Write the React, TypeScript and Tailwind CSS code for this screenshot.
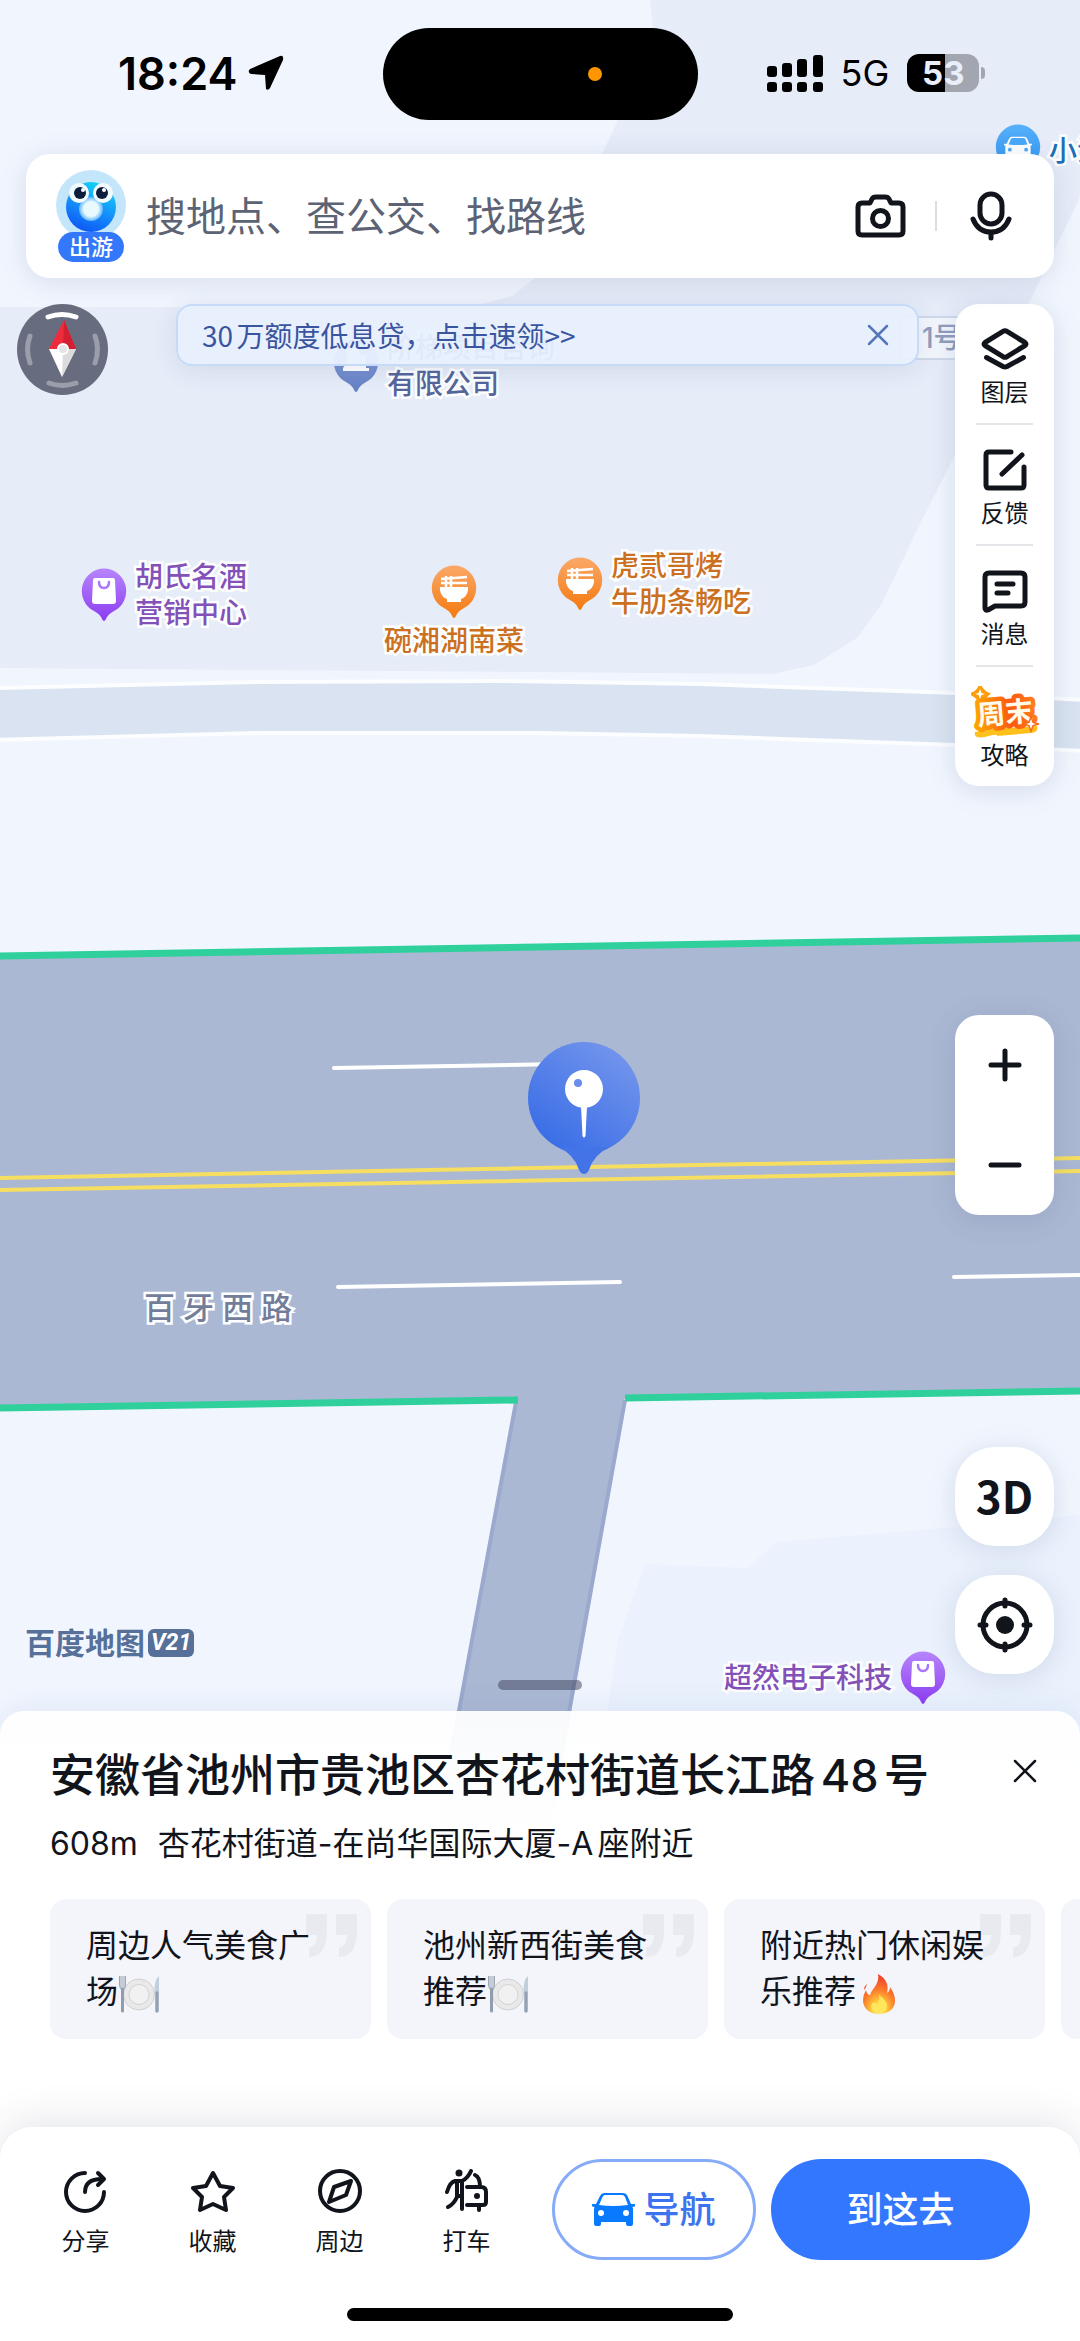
import type { ReactNode } from "react";

const tools = [
  { label: "图层", icon: <LayersIcon /> },
  { label: "反馈", icon: <FeedbackIcon /> },
  { label: "消息", icon: <MessageIcon /> },
  { label: "攻略", icon: <WeekendIcon /> },
];

const suggestions = [
  { text: "周边人气美食广场", emoji: <PlateEmoji /> },
  { text: "池州新西街美食推荐", emoji: <PlateEmoji /> },
  { text: "附近热门休闲娱乐推荐", emoji: <FireEmoji /> },
  { text: "", emoji: null },
];

const actions = [
  { label: "分享", icon: <ShareIcon /> },
  { label: "收藏", icon: <StarIcon /> },
  { label: "周边", icon: <NearbyIcon /> },
  { label: "打车", icon: <TaxiIcon /> },
];

const LineIcon = ({
  width,
  height,
  stroke = 4,
  children,
}: {
  width: number;
  height: number;
  stroke?: number;
  children: ReactNode;
}) => (
  <svg
    width={width}
    height={height}
    viewBox={`0 0 ${width} ${height}`}
    fill="none"
    stroke="#11141b"
    strokeWidth={stroke}
    strokeLinecap="round"
    strokeLinejoin="round"
    aria-hidden="true"
  >
    {children}
  </svg>
);

function LayersIcon() {
  return (
    <LineIcon width={48} height={42} stroke={5}>
      <path d="M22 3.4Q24 2 26 3.4L44 14.5Q46 16 44 17.5L26 28.6Q24 30 22 28.6L4 17.5Q2 16 4 14.5Z" />
      <path d="M5.5 29.5L22 38.5Q24 39.500 26 38.5L42.500 29.5" />
    </LineIcon>
  );
}

function FeedbackIcon() {
  return (
    <LineIcon width={44} height={42} stroke={5}>
      <path d="M28 3H6Q3 3 3 6V36Q3 39 6 39H38Q41 39 41 36V18" />
      <path d="M19 25L39 6" />
    </LineIcon>
  );
}

function MessageIcon() {
  return (
    <LineIcon width={46} height={43} stroke={5}>
      <path d="M7 3H39Q43 3 43 7V32Q43 36 39 36H13L6 40Q3 41 3 38V7Q3 3 7 3Z" />
      <path d="M15 14H31M15 23H26" />
    </LineIcon>
  );
}

function WeekendIcon() {
  return (
    <svg width="68" height="52" viewBox="0 0 68 52" aria-hidden="true">
      <defs>
        <linearGradient id="weekend" x1="0" x2="1" y1="0" y2="0">
          <stop offset="0" stopColor="#ffa200" />
          <stop offset="0.6" stopColor="#fb5a12" />
          <stop offset="1" stopColor="#ff7a1a" />
        </linearGradient>
      </defs>
      <path d="M4 46L20 43L66 40Q68 46 60 47L26 50Q28 47 14 51Q2 53 4 46Z" fill="#ffc01c" />
      <path d="M9 0Q12 6 17 8Q12 12 10 17Q8 12 1 8Q7 6 9 0Z" fill="#ff9d0a" stroke="#ff9d0a" strokeWidth="3" />
      <text
        x="34"
        y="37"
        textAnchor="middle"
        fontSize="28"
        fontWeight="700"
        fill="#fffbe8"
        stroke="url(#weekend)"
        strokeWidth="9"
        strokeLinejoin="round"
        paintOrder="stroke"
        fontFamily="'Noto Sans CJK SC', sans-serif"
        transform="rotate(-5 34 26)"
      >
        周末
      </text>
      <path d="M9 3L10.500 7L14 8L10.500 9L9 13L7.500 9L4 8L7.500 7Z" fill="#fff" />
      <path d="M60 33L61.500 37L65 38L61.500 39L60 43L58.500 39L55 38L58.500 37Z" fill="#fff" stroke="#fb6a18" strokeWidth="3" paintOrder="stroke" />
    </svg>
  );
}

function ShareIcon() {
  return (
    <LineIcon width={44} height={44}>
      <path d="M21 4A19 19 0 1 0 40 23" />
      <path d="M21 23C21 14 27 10 38 10" />
      <path d="M34 4L40 10L34 16" />
    </LineIcon>
  );
}

function StarIcon() {
  return (
    <LineIcon width={44} height={44}>
      <path d="M22 4L29 17L42 19L33 28L35 41L22 35L9 41L11 28L2 19L15 17Z" />
    </LineIcon>
  );
}

function NearbyIcon() {
  return (
    <LineIcon width={44} height={44}>
      <circle cx="22" cy="22" r="20" />
      <path d="M33 12L28 26L11 33L16 18Z" />
    </LineIcon>
  );
}

function TaxiIcon() {
  return (
    <LineIcon width={44} height={44}>
      <circle cx="14" cy="4" r="3.500" fill="#11141b" stroke="none" />
      <path d="M2 23Q5 13 10 12H17Q23 9 26 2" />
      <path d="M12 13V28Q9 35 3 38M17 13V40M12 27H17" />
      <path d="M30 6Q35 8 35 18M22 18H36Q41 18 41 23V33Q41 36 38 36H22M34 37V41" />
      <circle cx="32" cy="27" r="3" fill="#11141b" stroke="none" />
    </LineIcon>
  );
}

// fork, plate and knife
function PlateEmoji() {
  return (
    <svg className="inline-block align-middle" width="42" height="38" viewBox="0 0 42 38" aria-label="餐盘">
      <circle cx="21" cy="19.500" r="15.500" fill="#e9e9ea" stroke="#d0d0d2" />
      <circle cx="21" cy="19.500" r="10" fill="#f1f1f2" stroke="#d3d3d5" />
      <path d="M1.500 1V10Q2 15 4.500 15T7.500 10V1" fill="#c5ccd5" stroke="#9da7b3" />
      <path d="M4.500 14V36" stroke="#8f9dae" strokeWidth="3" strokeLinecap="round" />
      <path d="M41 1Q36 5 36.500 18H41Z" fill="#bfd0dc" />
      <path d="M39 18V36" stroke="#93a2b4" strokeWidth="3.500" strokeLinecap="round" />
    </svg>
  );
}

function FireEmoji() {
  return (
    <svg className="ml-1.5 inline-block align-middle" width="34" height="42" viewBox="0 0 34 42" aria-label="火">
      <defs>
        <radialGradient id="fire" cx="0.5" cy="0.9" r="0.8">
          <stop offset="0" stopColor="#fff28a" />
          <stop offset="0.3" stopColor="#ffc63a" />
          <stop offset="0.65" stopColor="#fb7a2c" />
          <stop offset="1" stopColor="#ee4a2b" />
        </radialGradient>
      </defs>
      <path
        d="M16 1C24 5 27 12 25 20Q28 18 28 14Q33 21 33 28C33 36 26 41 17 41C7 41 1 35 1 27Q1 22 4 17Q5 22 8 22C10 15 18 11 16 1Z"
        fill="url(#fire)"
      />
      <path d="M5 11Q4 15 2 17Q2 13 5 11Z" fill="#f0552b" />
      <path d="M17 22Q24 27 25 32Q25 40 17 40Q9 40 9 33Q10 30 12 29Q13 31 15 31Q18 28 17 22Z" fill="#ffe65a" />
    </svg>
  );
}

const CarShape = ({ body, glass }: { body: string; glass: string }) => (
  <>
    <path
      d="M12 1H31Q34 1 35.500 4L39 12H43V14Q42.500 15 40.500 15L41 17V32Q41 34 39 34H36Q34 34 34 32V30H9V32Q9 34 7 34H4Q2 34 2 32V17L2.500 15Q.5 15 0 14V12H4L8 4Q9.500 1 12 1Z"
      fill={body}
    />
    <path d="M13 3H30Q32 3 33 5L36 13Q21 15 7 13L10.500 5Q11.500 3 13 3Z" fill={glass} />
    <circle cx="9" cy="21" r="3" fill={glass} />
    <circle cx="34" cy="21" r="3" fill={glass} />
  </>
);

type PoiKind = "shop" | "food" | "office" | "parking";

const pinColors: Record<PoiKind, [string, string]> = {
  shop: ["#b685fb", "#8c3df0"],
  food: ["#fba868", "#f47a10"],
  office: ["#8ba2dc", "#6580c4"],
  parking: ["#57b1fb", "#2a8eee"],
};

const PoiPin = ({ kind }: { kind: PoiKind }) => (
  <svg className="shrink-0" width="46" height="54" viewBox="0 0 46 54" aria-hidden="true">
    <defs>
      <linearGradient id={`pin-${kind}`} x1="0" x2="0" y1="0" y2="1">
        <stop offset="0" stopColor={pinColors[kind][0]} />
        <stop offset="1" stopColor={pinColors[kind][1]} />
      </linearGradient>
    </defs>
    <path
      d="M23 0.500A22.500 22.500 0 0 1 33 43Q27 46 25 51Q23 55 21 51Q19 46 13 43A22.500 22.500 0 0 1 23 0.500Z"
      fill={`url(#pin-${kind})`}
    />
    {kind === "shop" && (
      <>
        <path d="M14 10H32Q34 10 34 12L35 33Q35 36 32 36H14Q11 36 11 33L12 12Q12 10 14 10Z" fill="#fff" />
        <path d="M18 14Q18 20 23 20T28 14" fill="none" stroke="#ab76f8" strokeWidth="2.500" strokeLinecap="round" />
      </>
    )}
    {kind === "food" && (
      <>
        <path d="M9 22H37V25Q36 32 30 34V37H16V34Q10 32 9 25Z" fill="#fff" />
        <path d="M10 14L36 12M10 18H36M15 11V22M20 11V22" stroke="#fff" strokeWidth="2.500" />
      </>
    )}
    {kind === "office" && <path d="M10 32V29L14 23V9H26V16H33V29H36V32Z" fill="#fff" />}
    {kind === "parking" && (
      <g transform="translate(9 12) scale(0.65)">
        <CarShape body="#fff" glass="#4ba8f8" />
      </g>
    )}
  </svg>
);

const halo = "font-medium whitespace-nowrap [-webkit-text-stroke:5px_#fdfeff] [paint-order:stroke_fill]";

const MapCanvas = () => (
  <svg
    className="absolute inset-0 h-full w-full"
    viewBox="0 0 1080 2341"
    preserveAspectRatio="xMidYMin slice"
    aria-hidden="true"
  >
    <rect width="1080" height="2341" fill="#f1f6fe" />
    <path
      d="M650 0H1080V197L1029 303L955 455L922 520L881 605L857 638L814 665L772 674L540 672L0 668V307H470L512 296L535 278L602 154L618 120L653 30Z"
      fill="#e6ecf8"
    />
    <path
      d="M-5 688L260 682L500 681L700 684L955 693L1085 700V751L955 745L700 736L540 733L260 733L-5 740Z"
      fill="#d9e3f1"
      stroke="#fbfdff"
      strokeWidth="4"
    />
    <path d="M645 1564L748 1568L776 1542L955 1527L1080 1515V1760H600L618 1640Z" fill="#ebf2fd" />
    {/* main road and the side street joining it */}
    <path d="M0 956L1080 938V1391L625 1399L514 1402L0 1408Z" fill="#abb8d3" />
    <path d="M516 1398L437 1830H548L625 1396Z" fill="#abb8d3" />
    <path d="M516 1402L437 1830M625 1400L548 1830" stroke="#9aa9cd" strokeWidth="4" />
    <g stroke="#2fd09b" strokeWidth="7">
      <path d="M0 956L1080 938" />
      <path d="M0 1408L518 1400" />
      <path d="M625 1398L1080 1391" />
    </g>
    <path d="M0 1178L1080 1158M0 1190L1080 1171" stroke="#f6de60" strokeWidth="4" />
    <path d="M334 1068L560 1064M338 1287L620 1282M954 1277L1080 1275" stroke="#fff" strokeWidth="4" strokeLinecap="round" />
  </svg>
);

const MapLabels = () => (
  <div className="absolute inset-0 overflow-hidden text-[28px] leading-9">
    <div className="absolute top-[124px] left-[995px] flex items-center gap-2 text-[#1c6fb8]">
      <PoiPin kind="parking" />
      <span className={halo}>小池</span>
    </div>
    <div className="absolute top-[330px] left-[333px] flex items-center gap-2 text-[#55669c]">
      <PoiPin kind="office" />
      <span className={halo}>
        阶梯项目咨询
        <br />
        有限公司
      </span>
    </div>
    <div className="absolute top-[316px] left-[900px] w-24 border-2 border-[#cfd9ea] bg-[#f3f6fc] pl-5 leading-10 text-[#8f9dbd]">
      <span className="font-medium">1号</span>
    </div>
    <div className="absolute top-[559px] left-[81px] flex items-center gap-2 text-[#8351b8]">
      <PoiPin kind="shop" />
      <span className={halo}>
        胡氏名酒
        <br />
        营销中心
      </span>
    </div>
    <div className="absolute top-[565px] left-[384px] flex flex-col items-center gap-1 text-[#cb7020]">
      <PoiPin kind="food" />
      <span className={halo}>碗湘湖南菜</span>
    </div>
    <div className="absolute top-[548px] left-[557px] flex items-center gap-2 text-[#cb7020]">
      <PoiPin kind="food" />
      <span className={halo}>
        虎贰哥烤
        <br />
        牛肋条畅吃
      </span>
    </div>
    <div className="absolute top-[1290px] left-[144px] flex gap-2 text-[31px] text-[#737c99]">
      {"百牙西路".split("").map((char) => (
        <span className={halo} key={char}>
          {char}
        </span>
      ))}
    </div>
    <div className="absolute top-[1651px] left-[724px] flex items-center gap-2 text-[#8351b8]">
      <span className={halo}>超然电子科技</span>
      <PoiPin kind="shop" />
    </div>
    <svg className="absolute top-[1042px] left-[528px]" width="112" height="132" viewBox="0 0 112 132" aria-label="选中位置">
      <defs>
        <linearGradient id="marker" x1="0.8" x2="0.2" y1="0.1" y2="0.9">
          <stop offset="0" stopColor="#7093ec" />
          <stop offset="1" stopColor="#3b6ee6" />
        </linearGradient>
      </defs>
      <circle cx="56" cy="56" r="56" fill="url(#marker)" />
      <path d="M30 105Q46 112 51 128Q53 132 56 132T61 128Q66 112 82 105Z" fill="#4373e7" />
      <circle cx="56" cy="47" r="19" fill="#fff" />
      <circle cx="50" cy="41" r="4" fill="#6a8eeb" />
      <path d="M53 64H59L57.500 94Q56 97 54.500 94Z" fill="#fff" />
    </svg>
  </div>
);

const StatusBar = () => (
  <header className="grid h-[154px] grid-cols-[1fr_315px_1fr] pt-7 text-black">
    <div className="flex h-[92px] items-center justify-end gap-[10px] pr-[99px] pb-0.5">
      <span className="text-[45px] leading-none font-semibold">18:24</span>
      <svg width="36" height="36" viewBox="0 0 36 36" aria-hidden="true">
        <path d="M32 1Q36 0 35 5L22 33Q20 36 18 34L17 20L3 19Q-1 17 2 14Z" fill="#000" />
      </svg>
    </div>
    <div className="flex h-[92px] items-center justify-end rounded-full bg-black pr-24">
      <span className="size-[14px] rounded-full bg-[#ff9500]" />
    </div>
    <div className="flex h-[92px] items-center gap-[18px] pb-0.5 pl-[69px]">
      <svg width="56" height="38" viewBox="0 0 56 38" aria-hidden="true">
        <rect x="0" y="12" width="10" height="11" rx="3" />
        <rect x="15" y="9" width="10" height="14" rx="3" />
        <rect x="30" y="5" width="10" height="18" rx="3" />
        <rect x="46" y="1" width="10" height="22" rx="3" />
        <rect x="0" y="28" width="10" height="10" rx="3" />
        <rect x="15" y="28" width="10" height="10" rx="3" />
        <rect x="30" y="28" width="10" height="10" rx="3" />
        <rect x="46" y="28" width="10" height="10" rx="3" />
      </svg>
      <span className="text-[36px] leading-none">5G</span>
      <div className="flex items-center gap-[2px]">
        <div className="flex h-[38px] w-[72px] items-center justify-center rounded-xl bg-[linear-gradient(90deg,#000_53%,#a2a6b0_53%)] text-[33px] leading-none font-bold text-[#e9eef9]">
          53
        </div>
        <span className="h-3 w-1 rounded-r-full bg-[#a2a6b0]" />
      </div>
    </div>
  </header>
);

const Mascot = () => (
  <div className="flex w-[70px] flex-col items-center">
    <svg width="70" height="70" viewBox="0 0 70 70" aria-hidden="true">
      <defs>
        <linearGradient id="mascot" x1="0.7" x2="0.3" y1="0" y2="1">
          <stop offset="0" stopColor="#14d6f5" />
          <stop offset="0.5" stopColor="#1592fa" />
          <stop offset="1" stopColor="#0e55f5" />
        </linearGradient>
        <radialGradient id="mouth">
          <stop offset="0.6" stopColor="#e8faff" />
          <stop offset="1" stopColor="#5fb4fa" />
        </radialGradient>
      </defs>
      <circle cx="35" cy="35" r="35" fill="#c4e6fb" />
      <circle cx="35" cy="37" r="25" fill="url(#mascot)" />
      <circle cx="35" cy="39" r="12" fill="url(#mouth)" />
      <circle cx="23" cy="23" r="10" fill="#f2fbff" />
      <circle cx="47" cy="23" r="10" fill="#f2fbff" />
      <circle cx="24" cy="23" r="6" fill="#0c1e3c" />
      <circle cx="46" cy="23" r="6" fill="#0c1e3c" />
      <circle cx="27" cy="20" r="2" fill="#fff" />
      <circle cx="48" cy="20" r="2" fill="#fff" />
    </svg>
    <span className="z-10 -mt-2 rounded-full bg-[#3377fb] px-[11px] text-[22px] leading-[30px] font-medium whitespace-nowrap text-white">
      出游
    </span>
  </div>
);

const SearchBar = () => (
  <form
    className="relative mx-[26px] flex h-[124px] items-center rounded-3xl bg-white pr-[42px] pl-[30px] shadow-[0_4px_28px_rgba(60,80,130,0.14)]"
    role="search"
  >
    <Mascot />
    <input
      className="ml-5 min-w-0 flex-1 bg-transparent pt-0.5 text-[40px] text-[#5c6374] outline-none placeholder:text-[#5c6374]"
      type="text"
      aria-label="搜索"
      placeholder="搜地点、查公交、找路线"
    />
    <button type="button" aria-label="拍照搜索">
      <LineIcon width={51} height={44} stroke={5}>
        <path d="M15 9L17 5Q18 3 21 3H30Q33 3 34 5L36 9H44Q48 9 48 13V37Q48 41 44 41H7Q3 41 3 37V13Q3 9 7 9Z" />
        <circle cx="25.500" cy="24.500" r="8" />
      </LineIcon>
    </button>
    <span className="mx-[29px] h-[30px] w-[2px] bg-[#dcdde1]" />
    <button className="ml-1" type="button" aria-label="语音搜索">
      <LineIcon width={42} height={50} stroke={5}>
        <rect x="10" y="3" width="22" height="30" rx="11" />
        <path d="M3 28Q8 41 21 41T39 28M21 41V47" />
      </LineIcon>
    </button>
  </form>
);

const Compass = () => (
  <button type="button" aria-label="指南针">
    <svg width="91" height="91" viewBox="0 0 91 91">
      <circle cx="45.500" cy="45.500" r="45.500" fill="#676d7f" />
      <g fill="none" stroke="#9a9eaa" strokeWidth="5" strokeLinecap="round">
        <path d="M13 32Q8 45 13 59M78 32Q83 45 78 59M32 79Q45 84 59 79" />
        <path d="M31 13Q45 8 59 13" stroke="#fff" />
      </g>
      <path d="M47 16L59 45H32Z" fill="#f02c3c" />
      <path d="M47 16L59 45H46Z" fill="#d31f31" />
      <path d="M32 45H59L45 73Z" fill="#fff" />
      <path d="M46 45H59L45 73Z" fill="#dcdcde" />
      <circle cx="46" cy="45" r="5" fill="#e4e4e6" stroke="#fff" strokeWidth="2" />
    </svg>
  </button>
);

const AdBanner = () => (
  <div className="flex h-[62px] flex-1 items-center justify-between rounded-2xl border-2 border-[#c6dbf8] bg-[#e8f0fe]/95 pr-7 pl-6 shadow-[0_4px_24px_rgba(60,80,130,0.12)]">
    <a className="font-['Noto_Sans_CJK_SC',sans-serif] text-[28px] leading-10 whitespace-nowrap text-[#3a559f] [text-autospace:normal]" href="#loan">
      30万额度低息贷，点击速领&gt;&gt;
    </a>
    <button type="button" aria-label="关闭广告">
      <svg width="22" height="22" viewBox="0 0 22 22" stroke="#5478b8" strokeWidth="2.500" strokeLinecap="round">
        <path d="M2 2L20 20M20 2L2 20" />
      </svg>
    </button>
  </div>
);

const floating = "bg-white shadow-[0_4px_28px_rgba(60,80,130,0.16)]";

const SideControls = () => (
  <div className="flex w-[99px] flex-col">
    <div className={`flex flex-col rounded-3xl px-[21px] ${floating}`}>
      {tools.map((tool) => (
        <button
          className="flex h-[121px] flex-col items-center justify-end gap-0.5 border-b-2 border-[#e4e5e8] pb-[14px] last:h-[119px] last:border-0"
          type="button"
          key={tool.label}
        >
          <span className="flex h-[52px] w-[68px] items-center justify-center">{tool.icon}</span>
          <span className="text-[24px] leading-8 text-[#11141b]">{tool.label}</span>
        </button>
      ))}
    </div>
    <div className={`mt-[229px] flex flex-col rounded-3xl ${floating}`}>
      <button className="flex h-[100px] items-center justify-center" type="button" aria-label="放大">
        <LineIcon width={34} height={34} stroke={5}>
          <path d="M17 3V31M3 17H31" />
        </LineIcon>
      </button>
      <button className="flex h-[100px] items-center justify-center" type="button" aria-label="缩小">
        <LineIcon width={34} height={34} stroke={5}>
          <path d="M3 17H31" />
        </LineIcon>
      </button>
    </div>
    <button
      className={`mt-[232px] h-[99px] rounded-[40px] pb-1 font-['Noto_Sans_CJK_SC',sans-serif] text-[44px] leading-none font-bold text-[#11141b] ${floating}`}
      type="button"
    >
      3D
    </button>
    <button
      className={`mt-[29px] mb-9 flex h-[99px] items-center justify-center rounded-[40px] ${floating}`}
      type="button"
      aria-label="定位"
    >
      <LineIcon width={56} height={56} stroke={5}>
        <circle cx="28" cy="28" r="22" />
        <path d="M28 3V9M28 47V53M3 28H9M47 28H53" />
        <circle cx="28" cy="28" r="9" fill="#11141b" stroke="none" />
      </LineIcon>
    </button>
  </div>
);

const PlaceSheet = () => (
  <section className="relative flex h-[456px] flex-col rounded-t-3xl bg-[linear-gradient(180deg,rgba(255,255,255,0.93),#fff_120px)] pt-9 pl-[50px] shadow-[0_-6px_28px_rgba(60,100,180,0.08)]">
    <span className="absolute -top-[31px] left-1/2 h-[10px] w-[84px] -translate-x-1/2 rounded-full bg-[#3c3f58]/50" />
    <div className="flex items-start justify-between pr-[43px]">
      <h1 className="text-[45px] leading-[58px] font-medium whitespace-nowrap text-[#11141b] [text-autospace:normal]">
        安徽省池州市贵池区杏花村街道长江路48号
      </h1>
      <button className="mt-3" type="button" aria-label="关闭">
        <svg width="24" height="24" viewBox="0 0 24 24" stroke="#11141b" strokeWidth="2.500" strokeLinecap="round">
          <path d="M2 2L22 22M22 2L2 22" />
        </svg>
      </button>
    </div>
    <p className="mt-4 flex gap-5 text-[32px] leading-[46px] whitespace-nowrap text-[#11141b] [text-autospace:normal]">
      <span>608m</span>
      <span>杏花村街道-在尚华国际大厦-A座附近</span>
    </p>
    <div className="mt-8 flex gap-4 overflow-hidden">
      {suggestions.map((item) => (
        <button
          className="relative h-[140px] w-[321px] shrink-0 rounded-2xl bg-[#f4f5fb] px-9 text-left text-[32px] leading-[46px] text-[#11141b]"
          type="button"
          aria-label={item.text || "更多推荐"}
          key={item.text}
        >
          <svg className="absolute top-[15px] right-[14px]" width="51" height="43" viewBox="0 0 51 43" fill="#e9eaef" aria-hidden="true">
            <path d="M0 0H21V16Q21 43 3 43V34Q11 32 11 21H0Z" />
            <path d="M30 0H51V16Q51 43 33 43V34Q41 32 41 21H30Z" />
          </svg>
          <span className="relative">
            {item.text}
            {item.emoji}
          </span>
        </button>
      ))}
    </div>
  </section>
);

const BottomBar = () => (
  <footer className="relative -mt-10 flex h-[214px] flex-col justify-between rounded-t-[32px] bg-white pt-8 pb-5 shadow-[0_-6px_40px_rgba(40,50,80,0.12)]">
    <div className="flex items-start pr-[50px] pl-[22px]">
      <nav className="mt-[10px] grid flex-1 grid-cols-4">
        {actions.map((action) => (
          <button className="flex flex-col items-center gap-[13px]" type="button" key={action.label}>
            {action.icon}
            <span className="text-[24px] leading-8 text-[#11141b]">{action.label}</span>
          </button>
        ))}
      </nav>
      <button
        className="ml-[22px] flex h-[101px] w-[204px] items-center justify-center gap-2 rounded-full border-[3px] border-[#86abf8] text-[36px] font-medium text-[#3b74ee]"
        type="button"
      >
        <svg width="43" height="35" viewBox="0 0 43 35" aria-hidden="true">
          <CarShape body="#087aff" glass="#fff" />
        </svg>
        导航
      </button>
      <button className="ml-[15px] h-[101px] w-[259px] rounded-full bg-[#3377ff] text-[36px] font-medium text-white" type="button">
        到这去
      </button>
    </div>
    <span className="h-[13px] w-[386px] self-center rounded-full bg-black" />
  </footer>
);

export default function App() {
  return (
    <main className="relative flex min-h-screen flex-col overflow-hidden font-['Inter','Noto_Sans_CJK_SC',sans-serif]" lang="zh-CN">
      <MapCanvas />
      <MapLabels />
      <div className="relative flex flex-1 flex-col">
        <StatusBar />
        <SearchBar />
        <div className="mt-[26px] flex flex-1 pr-[26px] pl-[17px]">
          <div className="flex flex-1 flex-col justify-between">
            <div className="flex items-start gap-[68px] pr-9">
              <Compass />
              <AdBanner />
            </div>
            <div className="mb-[50px] ml-2 flex items-center gap-[3px] text-[#56709a]">
              <span className="text-[30px] leading-9 font-bold">百度地图</span>
              <span className="rounded-md bg-[#56709a] px-[3px] font-['Roboto',sans-serif] text-[23px] leading-7 font-bold text-white italic">
                V21
              </span>
            </div>
          </div>
          <SideControls />
        </div>
      </div>
      <PlaceSheet />
      <BottomBar />
    </main>
  );
}
